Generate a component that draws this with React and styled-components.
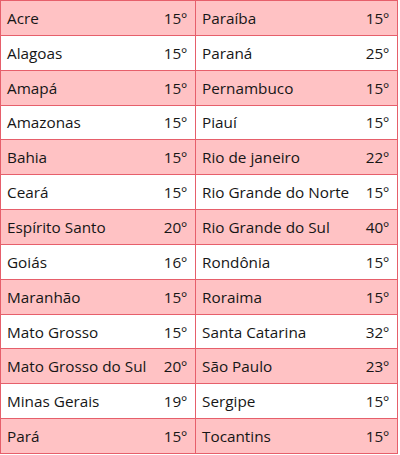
import { Fragment } from 'react';
import styled, { createGlobalStyle } from 'styled-components';

const rows = [
  ['Acre', '15º', 'Paraíba', '15º'],
  ['Alagoas', '15º', 'Paraná', '25º'],
  ['Amapá', '15º', 'Pernambuco', '15º'],
  ['Amazonas', '15º', 'Piauí', '15º'],
  ['Bahia', '15º', 'Rio de janeiro', '22º'],
  ['Ceará', '15º', 'Rio Grande do Norte', '15º'],
  ['Espírito Santo', '20º', 'Rio Grande do Sul', '40º'],
  ['Goiás', '16º', 'Rondônia', '15º'],
  ['Maranhão', '15º', 'Roraima', '15º'],
  ['Mato Grosso', '15º', 'Santa Catarina', '32º'],
  ['Mato Grosso do Sul', '20º', 'São Paulo', '23º'],
  ['Minas Gerais', '19º', 'Sergipe', '15º'],
  ['Pará', '15º', 'Tocantins', '15º'],
];

const GlobalStyle = createGlobalStyle`
  body {
    margin: 0;
    background: #fff;
    font-family: "Open Sans", "Noto Sans", sans-serif;
  }
`;

const Grid = styled.div`
  display: grid;
  grid-template-columns: 194px 201px;
  grid-auto-rows: 33.85px;
  gap: 1px;
  padding: 1px;
  width: 398px;
  box-sizing: border-box;
  background: #e65f6b;
`;

const Cell = styled.div`
  display: flex;
  align-items: center;
  justify-content: space-between;
  padding: 0 8px 0 6px;
  background: ${({ $shaded }) => ($shaded ? '#ffc2c4' : '#ffffff')};
  color: #161616;
  font-size: 15.3px;
`;

const Name = styled.span``;
const Temp = styled.span``;

export default function App() {
  return (
    <>
      <GlobalStyle />
      <Grid>
        {rows.map((r, i) => (
          <Fragment key={i}>
            <Cell $shaded={i % 2 === 0}>
              <Name>{r[0]}</Name>
              <Temp>{r[1]}</Temp>
            </Cell>
            <Cell $shaded={i % 2 === 0}>
              <Name>{r[2]}</Name>
              <Temp>{r[3]}</Temp>
            </Cell>
          </Fragment>
        ))}
      </Grid>
    </>
  );
}
